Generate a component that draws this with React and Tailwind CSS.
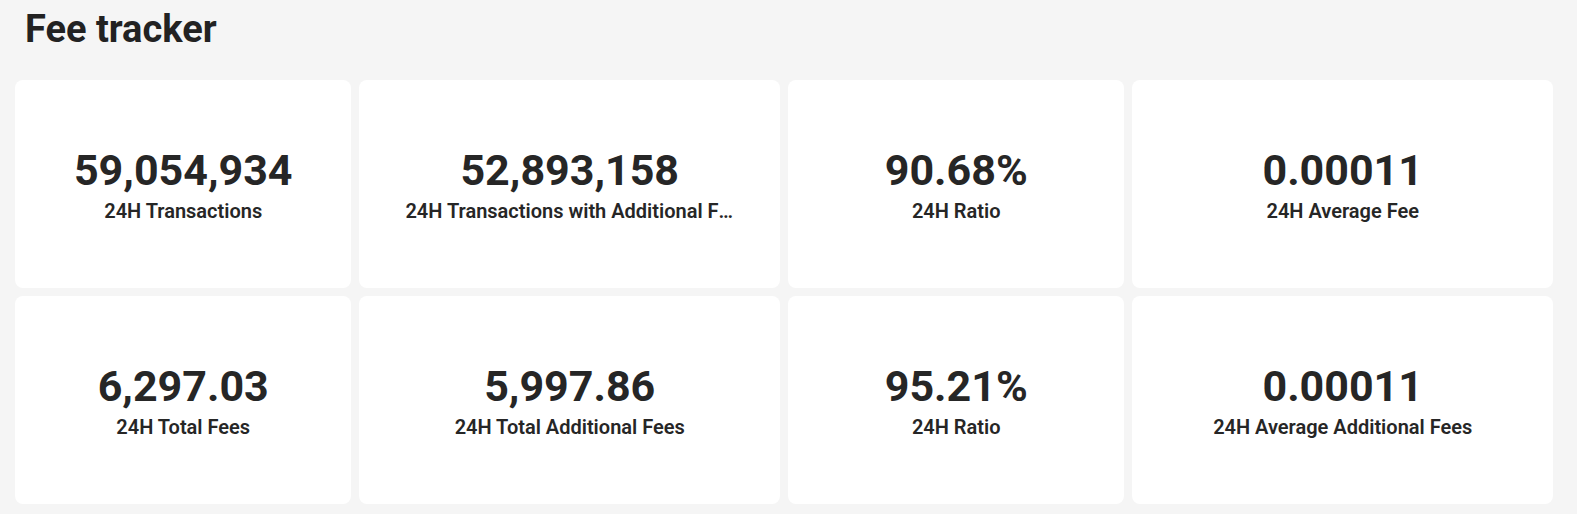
export default function App() {
  const stats = [
    { value: "59,054,934", label: "24H Transactions" },
    { value: "52,893,158", label: "24H Transactions with Additional Fees" },
    { value: "90.68%", label: "24H Ratio" },
    { value: "0.00011", label: "24H Average Fee" },
    { value: "6,297.03", label: "24H Total Fees" },
    { value: "5,997.86", label: "24H Total Additional Fees" },
    { value: "95.21%", label: "24H Ratio" },
    { value: "0.00011", label: "24H Average Additional Fees" },
  ];

  return (
    <div className="min-h-screen bg-[#f5f5f5] font-['Roboto',sans-serif] text-[#262626]">
      <h1 className="pl-[25px] pt-[10px] text-[38px] leading-[38px] font-bold text-[#222]">Fee tracker</h1>

      <div className="mt-[32px] pl-[15px] pr-[24px] grid grid-cols-[4fr_5fr_4fr_5fr] gap-2">
        {stats.map((s, i) => (
          <div
            key={i}
            className="h-[208px] bg-white rounded-lg px-[46px] pt-[2px] flex flex-col items-center justify-center min-w-0"
          >
            <div className="text-[43px] leading-[44px] font-bold">{s.value}</div>
            <div className="mt-[7px] w-full text-center text-[20px] leading-[24px] font-semibold text-[#262626] truncate">
              {s.label}
            </div>
          </div>
        ))}
      </div>
    </div>
  );
}
